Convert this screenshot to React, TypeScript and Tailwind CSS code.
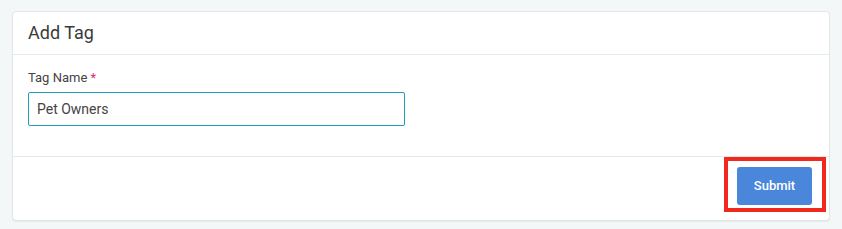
import React from "react";

export default function App() {
  return (
    <div className="w-[842px] h-[229px] bg-[#f4f7f8] pt-[11px] pl-[12px]" style={{ fontFamily: "Roboto, 'Noto Sans', sans-serif" }}>
      <div className="w-[818px] h-[210px] bg-white border border-[#e2e6e8] rounded-[4px] shadow-[0_1px_1px_rgba(0,0,0,0.06)] flex flex-col">
        <div className="h-[43px] border-b border-[#e6eaeb] flex items-center pl-[15px]">
          <span className="text-[18px] text-[#3a3a3a] leading-none">Add Tag</span>
        </div>
        <div className="h-[102px] border-b border-[#e6eaeb] pl-[15px] pt-[15px]">
          <div className="text-[13px] text-[#444] leading-[16px]">
            Tag Name <span className="text-[#d6336c]">*</span>
          </div>
          <div className="mt-[6px] w-[377px] h-[34px] border border-[#1f9cb8] rounded-[2px] flex items-center pl-[8px]">
            <span className="text-[14px] text-[#444]">Pet Owners</span>
          </div>
        </div>
        <div className="flex-1 flex justify-end items-start pr-[17px] pt-[10px]">
          <div className="relative">
            <button className="block w-[75px] h-[38px] bg-[#4a86d9] rounded-[3px] text-white text-[13px] font-medium">
              Submit
            </button>
            <div className="absolute left-[-13px] right-[-14px] top-[-10px] bottom-[-7px] border-[4px] border-[#f0291c]" />
          </div>
        </div>
      </div>
    </div>
  );
}
